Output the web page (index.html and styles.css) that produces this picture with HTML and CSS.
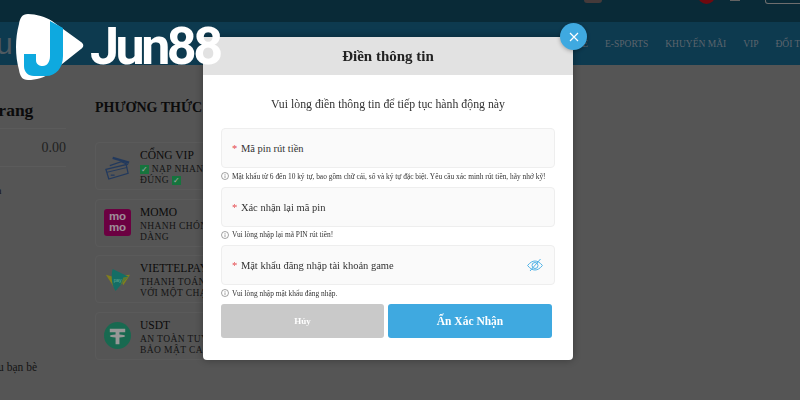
FILE: index.html
```html
<!DOCTYPE html>
<html lang="vi">
<head>
    <meta charset="UTF-8">
    <title>Jun88</title>
    <link rel="stylesheet" href="styles.css">
</head>
<body>
    <div class="page">
        <div class="topbar">
            <span class="top-icon"></span>
            <span class="top-flag"></span>
            <span class="top-lang"></span>
            <span class="top-btn"></span>
        </div>
        <div class="nav">
            <span class="nav-brand">u</span>
            <div class="nav-links">
                <a>GAME</a>
                <a>E-SPORTS</a>
                <a>KHUYẾN MÃI</a>
                <a>VIP</a>
                <a>ĐỔI THƯỞNG</a>
            </div>
        </div>
        <div class="content">
            <div class="side">
                <h2>Trang</h2>
                <div class="balance">0.00</div>
                <div class="side-link">n</div>
                <div class="side-link side-friends"><span>Giới thiệu bạn bè</span></div>
            </div>
            <div class="main">
                <h2>PHƯƠNG THỨC NẠP TIỀN</h2>
                <div class="pay-card">
                    <svg class="pay-icon" viewBox="0 0 28 28" fill="none" stroke="#35588f" stroke-width="1.300">
                        <path d="M9 5 26 10" stroke-width="2.500"/>
                        <path d="M6 13 18 9l7 3"/>
                        <path d="M2 17 23 12l2 9-20 6z"/>
                        <path d="M3 20 24 15" stroke-width="1"/>
                        <path d="M7 23h4"/>
                    </svg>
                    <div class="pay-text">
                        <div class="pay-name">CỔNG VIP</div>
                        <div class="pay-desc"><span class="tick">✓</span> NẠP NHANH CHÓNG<br>ĐÚNG <span class="tick">✓</span></div>
                    </div>
                </div>
                <div class="pay-card">
                    <div class="momo">mo<br>mo</div>
                    <div class="pay-text">
                        <div class="pay-name">MOMO</div>
                        <div class="pay-desc">NHANH CHÓNG, DỄ<br>DÀNG</div>
                    </div>
                </div>
                <div class="pay-card">
                    <svg class="pay-icon" viewBox="0 0 28 28">
                        <path d="M2 9 12 12 11 23z" fill="#c9c32a"/>
                        <path d="M27 9 20 20 16 10z" fill="#c9c32a"/>
                        <path d="M9 3 25 11 12 26C8 20 7 10 9 3z" fill="#1fa99c"/>
                        <path d="M20 12 25 11 17 20z" fill="#c9c32a" opacity=".7"/>
                        <text x="10" y="17" class="pay-mini">pay</text>
                    </svg>
                    <div class="pay-text">
                        <div class="pay-name">VIETTELPAY</div>
                        <div class="pay-desc">THANH TOÁN NHANH<br>VỚI MỘT CHẠM</div>
                    </div>
                </div>
                <div class="pay-card">
                    <svg class="pay-icon" viewBox="0 0 28 28">
                        <circle cx="14" cy="14" r="14" fill="#26a17b"/>
                        <path d="M6 7h16v3.500h-6V13c3.500.2 6 .8 6 1.500s-2.500 1.300-6 1.500v7h-4v-7c-3.500-.2-6-.8-6-1.500s2.500-1.300 6-1.500v-2.500H6z" fill="#e8e8e8"/>
                    </svg>
                    <div class="pay-text">
                        <div class="pay-name">USDT</div>
                        <div class="pay-desc">AN TOÀN TUYỆT ĐỐI<br>BẢO MẬT CAO</div>
                    </div>
                </div>
            </div>
        </div>
    </div>

    <div class="overlay">
        <div class="modal">
            <button class="close">
                <svg viewBox="0 0 10 10" width="10" height="10" stroke="#fff" stroke-width="1.200"><path d="M1 1l8 8M9 1l-8 8"/></svg>
            </button>
            <div class="modal-head">Điền thông tin</div>
            <div class="modal-body">
                <p class="lead">Vui lòng điền thông tin để tiếp tục hành động này</p>

                <div class="field"><span class="req">*</span> Mã pin rút tiền</div>
                <div class="hint">
                    <svg class="hint-icon" viewBox="0 0 8 8" fill="none" stroke="#666" stroke-width=".6"><circle cx="4" cy="4" r="3.500"/><path d="M4 3.400V6M4 2v.8"/></svg>
                    Mật khẩu từ 6 đến 10 ký tự, bao gồm chữ cái, số và ký tự đặc biệt. Yêu cầu xác minh rút tiền, hãy nhớ kỹ!
                </div>

                <div class="field"><span class="req">*</span> Xác nhận lại mã pin</div>
                <div class="hint">
                    <svg class="hint-icon" viewBox="0 0 8 8" fill="none" stroke="#666" stroke-width=".6"><circle cx="4" cy="4" r="3.500"/><path d="M4 3.400V6M4 2v.8"/></svg>
                    Vui lòng nhập lại mã PIN rút tiền!
                </div>

                <div class="field">
                    <span class="req">*</span> Mật khẩu đăng nhập tài khoản game
                    <svg class="eye" viewBox="0 0 16 14" fill="none" stroke="#4fb2e6" stroke-width="1">
                        <path d="M.6 7.500C3 4.500 5.500 3 8 3s5 1.500 7.400 4.500C13 10.500 10.500 12 8 12S3 10.500.6 7.500z"/>
                        <circle cx="8" cy="7.500" r="3"/>
                        <path d="M3 13 13.500 1"/>
                    </svg>
                </div>
                <div class="hint">
                    <svg class="hint-icon" viewBox="0 0 8 8" fill="none" stroke="#666" stroke-width=".6"><circle cx="4" cy="4" r="3.500"/><path d="M4 3.400V6M4 2v.8"/></svg>
                    Vui lòng nhập mật khẩu đăng nhập.
                </div>

                <div class="actions">
                    <button class="btn btn-cancel">Hủy</button>
                    <button class="btn btn-ok">Ấn Xác Nhận</button>
                </div>
            </div>
        </div>
    </div>

    <div class="logo">
        <svg class="logo-mark" viewBox="0 0 68 66">
            <path d="M12 0C20 0 30 3 36 7L65 28C68 30 68 33 65 35L36 58C28 64 20 66 12 66 6 66 4 62 3 56-1 42-1 24 3 10 4 4 6 0 12 0z" fill="#fff"/>
            <path d="M34 7 47 14V42C47 54 40 62 30 62H18C12 62 8 58 8 52V40H20V46C20 50 23 52 27 52 31 52 34 48 34 42z" fill="#0ea9df"/>
        </svg>
        <span class="logo-text">Jun88</span>
    </div>
</body>
</html>
```

FILE: styles.css
```css
* { box-sizing: border-box; }
html, body { margin: 0; height: 100%; overflow: hidden; }
body { font-family: "Liberation Serif", serif; color: #111; background: #838383; }

.page { width: 800px; height: 400px; overflow: hidden; background: #838383; }
.topbar { height: 22px; background: #0f4155; display: flex; align-items: flex-start; padding-left: 584px; overflow: hidden; }
.top-icon { width: 18px; height: 3px; background: #6b5a5a; border-radius: 0 0 8px 8px; flex: none; }
.top-flag { width: 17px; height: 17px; margin: -13px 0 0 96px; border-radius: 50%; background: #aa0f17; flex: none; }
.top-lang { width: 10px; height: 1px; margin-left: 15px; background: #999; flex: none; }
.top-btn { width: 60px; height: 4px; margin-left: 25px; border: 1px solid #aaa; border-top: 0; border-radius: 0 0 3px 3px; flex: none; }
.nav { height: 43px; background: #14597a; display: flex; align-items: center; overflow: hidden; }
.nav-brand { font-family: "Liberation Sans", sans-serif; font-size: 30px; margin-left: -4px; color: #7a8a96; }
.nav-links { margin-left: auto; width: 240px; flex: none; display: flex; gap: 17px; font-size: 9.500px; color: #8c9aa6; white-space: nowrap; }

.content { display: flex; }
.side { width: 78px; margin-left: -12px; flex: none; }
.side h2 { font-size: 17.500px; margin: 35px 0 0 0; height: 28px; white-space: nowrap; }
.balance { border-top: 1px solid #8d8d8d; border-bottom: 1px solid #8d8d8d; height: 39px; line-height: 38px; text-align: right; font-size: 14px; color: #333; }
.side-link { font-size: 11px; margin-top: 17px; padding-left: 8px; line-height: 13px; color: #222; }
.side-friends { display: flex; justify-content: flex-end; width: 49px; padding-left: 0; margin-top: 164px; font-size: 11.500px; white-space: nowrap; }
.main { margin-left: 29px; }
.main h2 { font-size: 14px; margin: 35px 0 26px; white-space: nowrap; }
.pay-card { width: 220px; height: 48px; margin-bottom: 8.500px; border: 1px solid #8b8b8b; border-radius: 4px; display: flex; align-items: center; padding-left: 8px; gap: 9px; }
.pay-icon { width: 27px; height: 27px; flex: none; }
.pay-mini { font: 5px "Liberation Sans", sans-serif; fill: #9fd; }
.pay-text { white-space: nowrap; align-self: flex-start; margin-top: 5px; }
.pay-name { font-size: 11.500px; line-height: 14px; }
.pay-desc { font-size: 9.500px; line-height: 11px; letter-spacing: .4px; margin-top: 2px; color: #222; }
.tick { display: inline-block; width: 9px; height: 9px; background: #22b35f; color: #fff; font-size: 8px; line-height: 9px; text-align: center; letter-spacing: 0; }
.momo { width: 27px; height: 27px; flex: none; background: #a50064; border-radius: 3px; color: #f3d9e8; font: bold 11.500px/11px "Liberation Sans", sans-serif; text-align: center; padding-top: 2px; }

.overlay { position: fixed; inset: 0; background: rgba(0, 0, 0, .35); }
.modal { position: absolute; left: 203px; top: 37px; width: 370px; height: 323px; background: #fff; border-radius: 0 0 4px 4px; box-shadow: 0 0 8px rgba(0, 0, 0, .35); }
.close { position: absolute; top: -14px; right: -14px; width: 27px; height: 27px; border: 0; border-radius: 50%; background: #3fa9e0; display: flex; align-items: center; justify-content: center; padding: 0; box-shadow: 0 1px 4px rgba(0, 0, 0, .3); }
.modal-head { height: 38px; background: #e2e2e2; text-align: center; font-weight: bold; font-size: 15px; line-height: 38px; color: #222; }
.modal-body { padding: 0 18px; }
.lead { margin: 0; height: 53px; padding-top: 21px; text-align: center; font-size: 11.800px; line-height: 17px; color: #333; }
.field { position: relative; height: 40px; width: 334px; background: #fafafa; border: 1px solid #eee; border-radius: 4px; font-size: 10.500px; line-height: 39px; padding-left: 10px; color: #333; }
.req { color: #e5484d; margin-right: 1px; }
.eye { position: absolute; right: 11px; top: 12px; width: 16px; height: 14px; }
.hint { display: flex; align-items: center; gap: 3px; height: 18.500px; padding-bottom: 2px; font-size: 7.400px; color: #333; white-space: nowrap; }
.hint-icon { width: 8px; height: 8px; flex: none; }
.actions { display: flex; gap: 4px; }
.btn { height: 34px; border: 0; border-radius: 3px; color: #fff; font-family: "Liberation Serif", serif; font-weight: bold; }
.btn-cancel { width: 163px; background: #c9c9c9; font-size: 9px; }
.btn-ok { width: 164px; background: #3fa9e0; font-size: 11.500px; }

.logo { position: absolute; left: 16px; top: 14px; display: flex; align-items: center; gap: 6px; }
.logo-mark { width: 68px; height: 66px; }
.logo-text { font-family: Roboto, "Liberation Sans", sans-serif; font-weight: 700; font-size: 52px; color: #fff; line-height: 1; letter-spacing: -3.500px; }
```
